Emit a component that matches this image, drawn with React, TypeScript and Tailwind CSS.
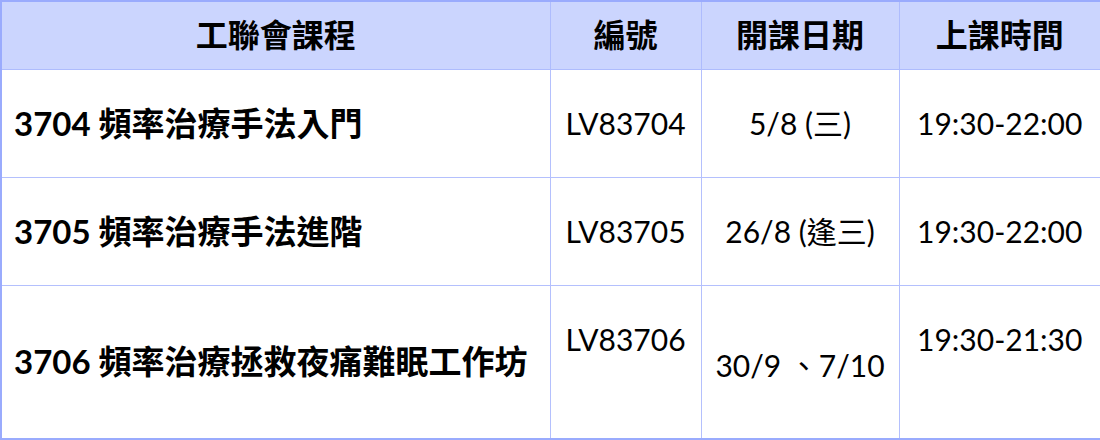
const rows = [
  {
    title: "3704 頻率治療手法入門",
    code: "LV83704",
    date: "5/8 (三)",
    time: "19:30-22:00",
    tall: false,
  },
  {
    title: "3705 頻率治療手法進階",
    code: "LV83705",
    date: "26/8 (逢三)",
    time: "19:30-22:00",
    tall: false,
  },
  {
    title: "3706 頻率治療拯救夜痛難眠工作坊",
    code: "LV83706",
    date: "30/9 、7/10",
    time: "19:30-21:30",
    tall: true,
  },
];

const font = "font-['Lato','Noto_Sans_CJK_TC',sans-serif]";

export default function App() {
  return (
    <div className={`w-[1100px] h-[440px] bg-white text-black ${font}`}>
      <table className="w-[1100px] border-collapse border-2 border-[#9aabfd] table-fixed">
        <colgroup>
          <col className="w-[549px]" />
          <col className="w-[151px]" />
          <col className="w-[198px]" />
          <col className="w-[202px]" />
        </colgroup>
        <thead>
          <tr className="h-[68px] bg-[#cbd5fe]">
            {["工聯會課程", "編號", "開課日期", "上課時間"].map((h) => (
              <th
                key={h}
                className="border border-[#aebcfd] text-center text-[32px] font-bold leading-none"
              >
                {h}
              </th>
            ))}
          </tr>
        </thead>
        <tbody>
          {rows.map((r) => (
            <tr key={r.code} className={r.tall ? "h-[154px]" : "h-[108px]"}>
              <td className="border border-[#b4c0fd] pl-[12px] text-[33px] font-bold leading-none align-middle">
                {r.title}
              </td>
              <td
                className={`border border-[#b4c0fd] text-center text-[30px] leading-none ${
                  r.tall ? "align-top pt-[38px]" : "align-middle"
                }`}
              >
                {r.code}
              </td>
              <td
                className={`border border-[#b4c0fd] text-center text-[30px] leading-none align-middle ${
                  r.tall ? "pt-[6px]" : ""
                }`}
              >
                {r.date}
              </td>
              <td
                className={`border border-[#b4c0fd] text-center text-[30px] leading-none ${
                  r.tall ? "align-top pt-[38px]" : "align-middle"
                }`}
              >
                {r.time}
              </td>
            </tr>
          ))}
        </tbody>
      </table>
    </div>
  );
}
